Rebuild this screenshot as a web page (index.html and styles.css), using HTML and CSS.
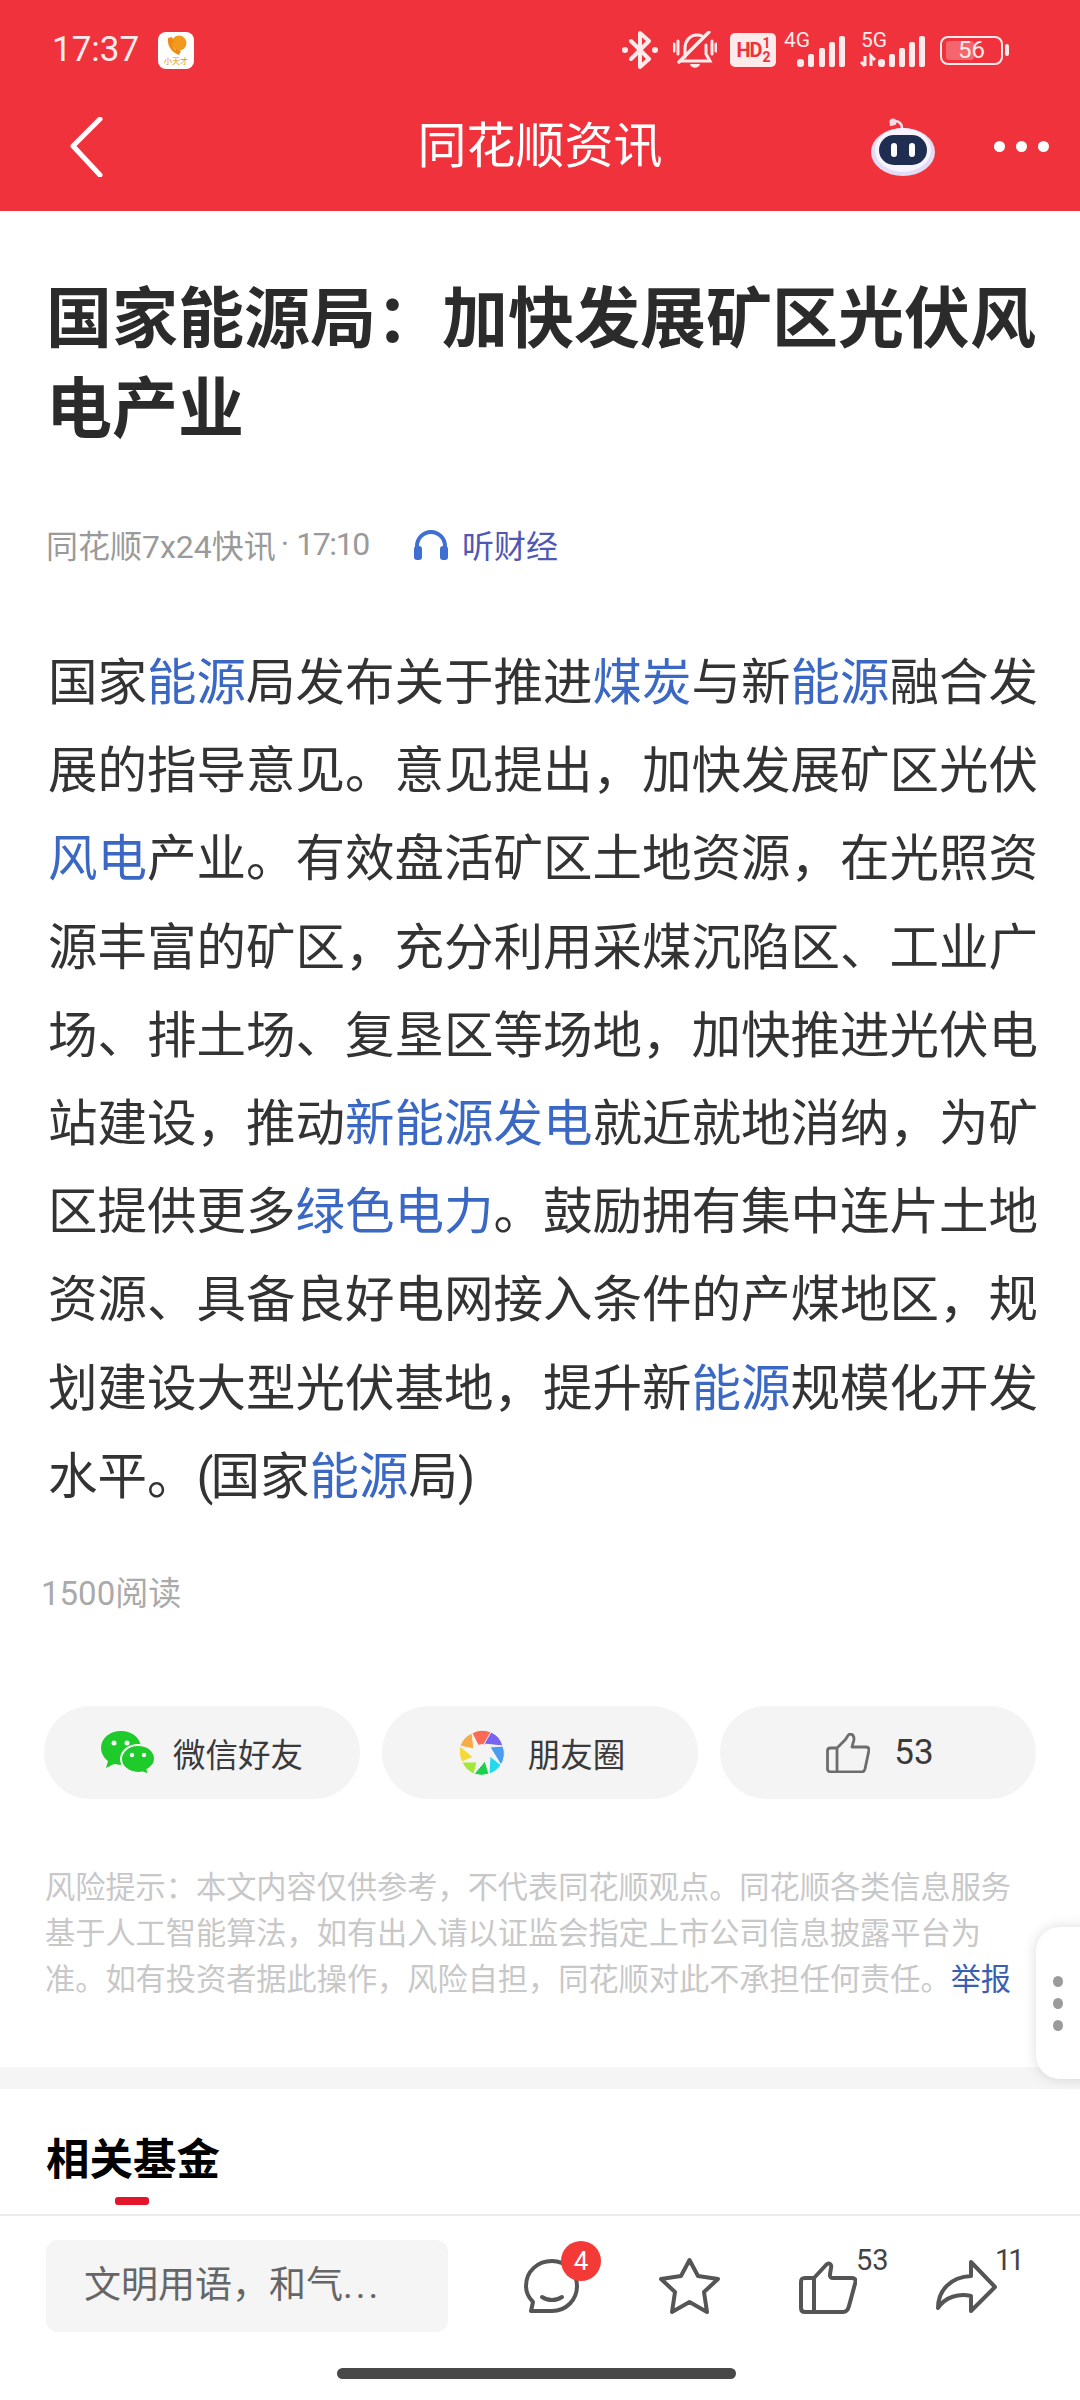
FILE: index.html
```html
<!DOCTYPE html>
<html lang="zh-CN">
<head>
<meta charset="utf-8">
<title>同花顺资讯</title>
<link rel="stylesheet" href="styles.css">
</head>
<body>
<div class="page">
  <header class="header">
    <div class="status">
      <span class="time">17:37</span>
      <span class="appicon">
        <svg width="24" height="22" viewBox="0 0 24 22"><circle cx="15" cy="8" r="7.5" fill="#f39a1e"/><path d="M4 3c-1 7 3 14 11 17l2-4-4-2-2 1c-2-2-3-5-3-7l2-1-2-5z" fill="#ee8a12"/></svg>
        <span class="apptext">小天才</span>
      </span>
      <div class="sysicons">
        <svg class="ic-bt" width="36" height="38" viewBox="0 0 36 38"><path d="M9 10l18 18-9 8V2l9 8L9 28" fill="none" stroke="#fdeaea" stroke-width="4" stroke-linejoin="round" stroke-linecap="round"/><circle cx="3" cy="19" r="3" fill="#fdeaea"/><circle cx="33" cy="19" r="3" fill="#fdeaea"/></svg>
        <svg class="ic-bell" width="44" height="38" viewBox="0 0 44 38"><g fill="none" stroke="#fdeaea" stroke-width="3" stroke-linecap="round"><path d="M12 26V17c0-7 5-13 12-13 2 0 3 0 5 1M33 14v9l4 7H8"/><path d="M6 31L36 1" stroke-width="3.4"/><path d="M1 13v7M5 10v13M39 10v13M43 13v7"/></g><path d="M17 33h10c-1 5-9 5-10 0z" fill="#fdeaea"/></svg>
        <span class="hd">HD<span class="hdnum"><span>1</span><span>2</span></span></span>
        <span class="net"><span class="netlabel">4G</span>
          <svg class="bars" width="48" height="31" viewBox="0 0 48 31"><g fill="#fdeaea"><rect x="0" y="23" width="7" height="8" rx="3"/><rect x="11" y="18" width="6" height="13" rx="2"/><rect x="22" y="12" width="6" height="19" rx="2"/><rect x="32" y="6" width="6" height="25" rx="2"/><rect x="42" y="0" width="6" height="31" rx="2"/></g></svg></span>
        <span class="net net5"><span class="netlabel">5G</span>
          <svg class="bars" width="66" height="31" viewBox="0 0 66 31"><g fill="#fdeaea"><path d="M6 20v10M2 26l4 4 M12 30V20l4 4" stroke="#fdeaea" stroke-width="3" fill="none"/><rect x="19" y="23" width="7" height="8" rx="3"/><rect x="30" y="18" width="6" height="13" rx="2"/><rect x="40" y="12" width="6" height="19" rx="2"/><rect x="50" y="6" width="6" height="25" rx="2"/><rect x="60" y="0" width="6" height="31" rx="2"/></g></svg></span>
        <span class="battery"><span class="batfill"></span><span class="batnum">56</span></span>
        <span class="battip"></span>
      </div>
    </div>
    <nav class="nav">
      <svg class="back" width="34" height="60" viewBox="0 0 34 60"><path d="M31 2L4 29l27 29" fill="none" stroke="#fff" stroke-width="5" stroke-linecap="round" stroke-linejoin="round"/></svg>
      <h1 class="navtitle">同花顺资讯</h1>
      <svg class="robot" width="64" height="58" viewBox="0 0 64 58"><path d="M20 8c0-5 6-6 9-3 1 1 2 3 2 5" fill="none" stroke="#f3dce6" stroke-width="2.5"/><circle cx="22" cy="4" r="3.5" fill="#f3dce6"/><ellipse cx="32" cy="34" rx="32" ry="24" fill="#e2dcf4"/><ellipse cx="32" cy="32" rx="28" ry="22" fill="#f7f4fd"/><rect x="8" y="17" width="48" height="30" rx="15" fill="#1f2d50"/><rect x="20" y="25" width="6" height="14" rx="3" fill="#fff"/><rect x="38" y="25" width="6" height="14" rx="3" fill="#fff"/></svg>
      <div class="dots"><i></i><i></i><i></i></div>
    </nav>
  </header>

  <main class="main">
    <h2 class="title">国家能源局&#xFF1A;加快发展矿区光伏风电产业</h2>
    <div class="meta">
      <span>同花顺7x24快讯</span><span class="sep">·</span><span class="tight">17:10</span>
      <span class="listen">
        <svg width="34" height="31" viewBox="0 0 34 31"><path d="M3 24V17a14 14 0 0 1 28 0v7" fill="none" stroke="#3f6fd2" stroke-width="4"/><rect x="0" y="17" width="8" height="14" rx="3" fill="#3f6fd2"/><rect x="26" y="17" width="8" height="14" rx="3" fill="#3f6fd2"/></svg>
        <span class="listentext">听财经</span>
      </span>
    </div>
    <p class="body">国家<a class="lnk">能源</a>局发布关于推进<a class="lnk">煤炭</a>与新<a class="lnk">能源</a>融合发展的指导意见。意见提出&#xFF0C;加快发展矿区光伏<a class="lnk">风电</a>产业。有效盘活矿区土地资源&#xFF0C;在光照资源丰富的矿区&#xFF0C;充分利用采煤沉陷区、工业广场、排土场、复垦区等场地&#xFF0C;加快推进光伏电站建设&#xFF0C;推动<a class="lnk">新能源发电</a>就近就地消纳&#xFF0C;为矿区提供更多<a class="lnk">绿色电力</a>。鼓励拥有集中连片土地资源、具备良好电网接入条件的产煤地区&#xFF0C;规划建设大型光伏基地&#xFF0C;提升新<a class="lnk">能源</a>规模化开发水平。<span class="paren">(</span>国家<a class="lnk">能源</a>局)</p>
    <div class="reads">1500阅读</div>
    <div class="shares">
      <button class="pill">
        <svg width="54" height="44" viewBox="0 0 54 44"><path d="M20 0C9 0 0 7 0 17c0 5 3 10 7 13l-2 7 8-4c2 .6 4 .8 7 .8C31 34 40 27 40 17S31 0 20 0z" fill="#1ecb2a"/><path d="M37 14c-10 0-17 7-17 14s7 14 17 14c2 0 3 0 5-.5l6 2.500-1.500-5.500C51 36 54 32 54 28c0-8-7-14-17-14z" fill="#1ecb2a" stroke="#f4f4f4" stroke-width="2"/><circle cx="13" cy="12" r="2.500" fill="#f4f4f4"/><circle cx="26" cy="12" r="2.500" fill="#f4f4f4"/><circle cx="31" cy="24" r="2.200" fill="#f4f4f4"/><circle cx="43" cy="24" r="2.200" fill="#f4f4f4"/></svg>
        <span>微信好友</span>
      </button>
      <button class="pill pill-m">
        <svg width="46" height="46" viewBox="0 0 46 46"><g stroke="#f4f4f4" stroke-width="1"><path d="M23 23L13 3a22 22 0 0 1 19-1z" fill="#fb6a55"/><path d="M25 14L32 2a22 22 0 0 1 12 14z" fill="#7a62f2"/><path d="M31 17L44 16a22 22 0 0 1-2 19z" fill="#4a9cf0"/><path d="M31 26L42 35a22 22 0 0 1-12 9z" fill="#25d8ee"/><path d="M26 31L30 44a22 22 0 0 1-15 0z" fill="#18d24a"/><path d="M18 32L15 44A22 22 0 0 1 3 32z" fill="#a3e835"/><path d="M14 27L3 32a22 22 0 0 1-2-16z" fill="#f5d83c"/><path d="M15 19L1 16A22 22 0 0 1 13 3z" fill="#f9ac45"/></g><circle cx="23" cy="23" r="9" fill="#f4f4f4"/></svg>
        <span>朋友圈</span>
      </button>
      <button class="pill pill-t">
        <svg width="44" height="40" viewBox="0 0 44 40"><path d="M11 15l8-8c2-2 3-6 5-6 4 0 5 5 3 9l-1 4h14c2 0 3 1 3 3l-4 19c-.5 2-2 3-4 3H5c-2 0-3.500-1-3.500-3V18c0-2 1-3 3-3h6zm0 0v24" fill="none" stroke="#6d6d6d" stroke-width="2.800" stroke-linejoin="round"/></svg>
        <span class="num">53</span>
      </button>
    </div>
    <p class="risk">风险提示&#xFF1A;本文内容仅供参考&#xFF0C;不代表同花顺观点。同花顺各类信息服务基于人工智能算法&#xFF0C;如有出入请以证监会指定上市公司信息披露平台为准。如有投资者据此操作&#xFF0C;风险自担&#xFF0C;同花顺对此不承担任何责任。<a class="report">举报</a></p>
    <div class="band"></div>
    <section class="related">
      <h3 class="reltitle">相关基金</h3>
      <div class="relmark"></div>
    </section>
    <aside class="sidetab"><i></i><i></i><i></i></aside>
  </main>

  <footer class="footer">
    <div class="bar">
      <div class="input">文明用语&#xFF0C;和气<span class="ell">...</span></div>
      <div class="acts">
        <span class="act act-c">
          <svg width="55" height="56" viewBox="0 0 55 56"><path d="M28 3C14 3 2 13 2 28c0 7 3 12 7 16l-2 9h21c14 0 25-11 25-25C53 15 42 3 28 3z" fill="none" stroke="#555" stroke-width="4" stroke-linejoin="round"/><path d="M18 39c6 4 14 4 20 0" fill="none" stroke="#555" stroke-width="4" stroke-linecap="round"/></svg>
          <span class="badge">4</span>
        </span>
        <span class="act act-s">
          <svg width="61" height="58" viewBox="0 0 61 58"><path d="M30.500 3L39 19l20 3-14 13 3 20-17.500-10L13 55l3-20L2 22l20-3z" fill="none" stroke="#555" stroke-width="4" stroke-linejoin="round"/></svg>
        </span>
        <span class="act act-t">
          <svg width="58" height="54" viewBox="0 0 58 54"><path d="M15 18L27 5c3-3 6-1 5 3l-1 6c-.5 3 1 4 3 4h19c3 0 4 2 3.500 4L50 46c-1 4-3 6-6 6H6c-3 0-4-2-4-4V22c0-3 1-4 4-4h9zm0 0v34" fill="none" stroke="#555" stroke-width="4" stroke-linejoin="round"/></svg>
          <sup class="cnt">53</sup>
        </span>
        <span class="act act-f">
          <svg width="62" height="54" viewBox="0 0 62 54"><path d="M36 3L60 28 36 52V37C24 34 10 38 3 49c0-18 13-31 33-32z" fill="none" stroke="#555" stroke-width="4" stroke-linejoin="round"/></svg>
          <sup class="cnt cnt-f">11</sup>
        </span>
      </div>
    </div>
    <div class="homebar"></div>
  </footer>
</div>
</body>
</html>
```

FILE: styles.css
```css
* { box-sizing: border-box; }
html, body { margin: 0; padding: 0; background: #fff; }
body { font-family: Roboto, "Noto Sans CJK SC", "Noto Sans", sans-serif; }
.page { width: 1080px; height: 2400px; display: flex; flex-direction: column; overflow: hidden; }

.header { height: 211px; background: #f0323c; color: #fff; flex: none; }
.status { height: 100px; display: flex; align-items: center; padding: 0 71px 0 52px; }
.time { font-size: 35px; color: #fdeaea; width: 106px; position: relative; top: -1px; }
.appicon { width: 36px; height: 37px; border-radius: 8px; background: #fff; display: flex; flex-direction: column; align-items: center; justify-content: flex-start; padding-top: 3px; overflow: hidden; }
.apptext { font-size: 8px; line-height: 9px; color: #e5901c; white-space: nowrap; }
.sysicons { margin-left: auto; display: flex; align-items: center; }
.ic-bell { margin-left: 15px; }
.hd { margin-left: 13px; width: 46px; height: 34px; border-radius: 5px; background: #fdeaea; color: #f0323c; font-size: 20px; font-weight: 700; display: flex; align-items: center; justify-content: center; letter-spacing: -1px; }
.hdnum { display: flex; flex-direction: column; font-size: 14px; line-height: 14px; margin-left: 1px; }
.net { position: relative; width: 48px; height: 34px; margin-left: 21px; display: block; }
.net5 { width: 66px; margin-left: 14px; }
.netlabel { position: absolute; left: -13px; top: -3px; font-size: 21px; line-height: 20px; color: #fdeaea; }
.net5 .netlabel { left: 2px; }
.bars { position: absolute; right: 0; bottom: 0; }
.battery { margin-left: 15px; width: 63px; height: 29px; border: 2.5px solid #fdeaea; border-radius: 8px; position: relative; display: block; }
.batfill { position: absolute; left: 4px; top: 3px; bottom: 3px; width: 28px; background: #f4656d; border-radius: 3px; }
.batnum { position: absolute; left: 0; right: 0; top: -3px; text-align: center; font-size: 24px; line-height: 30px; color: #fdeaea; }
.battip { width: 4px; height: 12px; background: #fdeaea; border-radius: 2px; margin-left: 2px; }

.nav { height: 111px; position: relative; display: flex; align-items: center; padding: 0 31px 18px 69px; }
.navtitle { position: absolute; left: 0; right: 0; top: 15px; margin: 0; text-align: center; font-size: 49px; line-height: 64px; font-weight: 400; color: #fff; pointer-events: none; }
.robot { margin-left: auto; }
.dots { margin-left: 59px; display: flex; gap: 11px; }
.dots i { width: 11px; height: 11px; background: #fff; border-radius: 50%; }

.main { flex: 1; position: relative; overflow: hidden; }
.title { margin: 64px 40px 0 46px; font-size: 66px; line-height: 90px; font-weight: 700; color: #2b2b2b; }
.meta { margin: 67px 0 0 46px; display: flex; align-items: center; height: 44px; font-size: 32px; color: #9a9a9a; white-space: nowrap; }
.tight { letter-spacing: -1.400px; }
.sep { margin: 0 7px 0 5px; }
.listen { margin-left: 45px; display: flex; align-items: center; gap: 14px; }
.listentext { color: #5057b4; font-size: 32px; }
.body { margin: 73px 0 0 48px; width: 996px; font-size: 49.500px; line-height: 88.200px; color: #333; }
.lnk { color: #3a68c4; }
.paren { letter-spacing: -3px; }
.reads { margin: 51px 0 0 41px; font-size: 33px; line-height: 44px; color: #aaa; }
.shares { margin: 90px 44px 0; display: flex; gap: 22px; }
.pill { flex: 1 1 0; min-width: 0; height: 93px; border: 0; border-radius: 47px; background: #f4f4f4; display: flex; align-items: center; justify-content: center; gap: 18px; padding: 0; font: inherit; font-size: 32.500px; color: #3a3a3a; }
.pill-m { gap: 23px; }
.pill-m svg, .pill-t svg { margin-left: 4px; }
.pill .num { font-size: 35px; margin-left: 6px; }
.risk { margin: 66px 44px 0 45px; font-size: 30.200px; line-height: 46px; color: #c8c8c8; }
.report { color: #3a5fb0; }
.band { margin-top: 64px; height: 22px; background: #f5f5f5; }
.related { padding: 42px 0 0 46px; }
.reltitle { margin: 0; font-size: 43.500px; line-height: 60px; font-weight: 700; color: #000; }
.relmark { margin: 6px 0 0 69px; width: 34px; height: 8px; border-radius: 3px; background: #e3152b; }
.sidetab { position: absolute; left: 1036px; top: 1716px; width: 60px; height: 152px; background: #fff; border-radius: 24px 0 0 24px; box-shadow: 0 0 14px rgba(0,0,0,.14); display: flex; flex-direction: column; align-items: flex-start; justify-content: center; gap: 11px; padding-left: 17px; }
.sidetab i { width: 10px; height: 11px; background: #9b9b9b; border-radius: 50%; }

.footer { height: 186px; flex: none; border-top: 2px solid #ececec; display: flex; flex-direction: column; }
.bar { height: 154px; padding: 24px 0 0 46px; display: flex; align-items: flex-start; }
.input { width: 402px; height: 92px; border-radius: 12px; background: #f5f5f5; color: #666; font-size: 37px; line-height: 92px; padding-left: 38px; }
.ell { letter-spacing: 3px; }
.acts { position: relative; flex: 1; height: 92px; }
.act { position: absolute; top: 18px; display: block; }
.act-c { left: 76px; }
.act-s { left: 211px; top: 17px; }
.act-t { left: 351px; top: 20px; }
.act-f { left: 487px; top: 19px; }
.badge { position: absolute; left: 37px; top: -17px; width: 40px; height: 40px; border-radius: 50%; background: #f43a36; color: #fff; font-size: 26px; line-height: 40px; text-align: center; }
.cnt { position: absolute; left: 57px; top: -15px; font-size: 29px; line-height: 30px; color: #444; }
.cnt-f { left: 60px; top: -14px; letter-spacing: -3px; }
.homebar { width: 399px; height: 11px; border-radius: 6px; background: #484848; margin: -2px 0 0 337px; }
```
